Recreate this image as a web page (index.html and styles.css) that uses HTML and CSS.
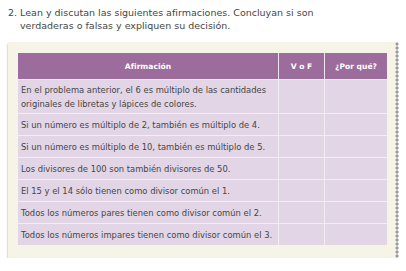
FILE: index.html
```html
<!DOCTYPE html>
<html lang="es">
<head>
<meta charset="utf-8">
<link rel="stylesheet" href="styles.css">
</head>
<body>
<div class="exercise">
  <p class="prompt">2. Lean y discutan las siguientes afirmaciones. Concluyan si son verdaderas o falsas y expliquen su decisión.</p>
  <div class="card">
    <table class="facts">
      <thead>
        <tr><th class="c1">Afirmación</th><th class="c2">V o F</th><th class="c3">¿Por qué?</th></tr>
      </thead>
      <tbody>
        <tr class="tall"><td>En el problema anterior, el 6 es múltiplo de las cantidades originales de libretas y lápices de colores.</td><td></td><td></td></tr>
        <tr><td>Si un número es múltiplo de 2, también es múltiplo de 4.</td><td></td><td></td></tr>
        <tr><td>Si un número es múltiplo de 10, también es múltiplo de 5.</td><td></td><td></td></tr>
        <tr><td>Los divisores de 100 son también divisores de 50.</td><td></td><td></td></tr>
        <tr><td>El 15 y el 14 sólo tienen como divisor común el 1.</td><td></td><td></td></tr>
        <tr><td>Todos los números pares tienen como divisor común el 2.</td><td></td><td></td></tr>
        <tr><td>Todos los números impares tienen como divisor común el 3.</td><td></td><td></td></tr>
      </tbody>
    </table>
  </div>
</div>
</body>
</html>
```

FILE: styles.css
```css
html, body {
  margin: 0;
  padding: 0;
  background: #ffffff;
}

.exercise {
  padding: 6px 0 0 8px;
  font-family: "DejaVu Sans", "Open Sans", sans-serif;
  color: #454545;
}

.prompt {
  margin: 0;
  width: 318px;
  font-size: 9.5px;
  line-height: 13px;
  padding-left: 12px;
  text-indent: -12px;
}

.card {
  position: relative;
  margin-top: 10px;
  width: 367px;
  padding: 11px 12px 13px 10px;
  background: #f6f4e7;
  box-shadow: 0 2px 2px rgba(80, 80, 80, 0.55);
}

.card::after {
  content: "";
  position: absolute;
  top: 0;
  bottom: 0;
  right: -3px;
  width: 5px;
  background:
    radial-gradient(circle at 2px 2px, #9a9a9a 1.3px, transparent 1.8px) 0 0 / 5px 4px repeat-y;
}

.facts {
  width: 367px;
  border-collapse: collapse;
  table-layout: fixed;
  font-size: 8.4px;
  color: #454545;
}

.facts th {
  height: 26px;
  padding: 0;
  background: #9c6c9c;
  color: #ffffff;
  font-weight: 700;
  font-size: 7.6px;
  text-align: center;
  border: 1px solid #efe4f0;
  border-top: none;
}

.facts th.c1 { width: 260px; border-left: none; }
.facts th.c2 { width: 45px; }
.facts th.c3 { width: 62px; border-right: none; }

.facts td {
  height: 21px;
  padding: 0 3px;
  background: #e1d5e6;
  border: 1px solid #f3edf4;
  line-height: 14px;
  vertical-align: middle;
  white-space: normal;
}

.facts td:first-child { border-left: none; }
.facts td:last-child { border-right: none; }
.facts tbody tr:last-child td { border-bottom: none; }

.facts tr.tall td {
  height: 33px;
}
```
